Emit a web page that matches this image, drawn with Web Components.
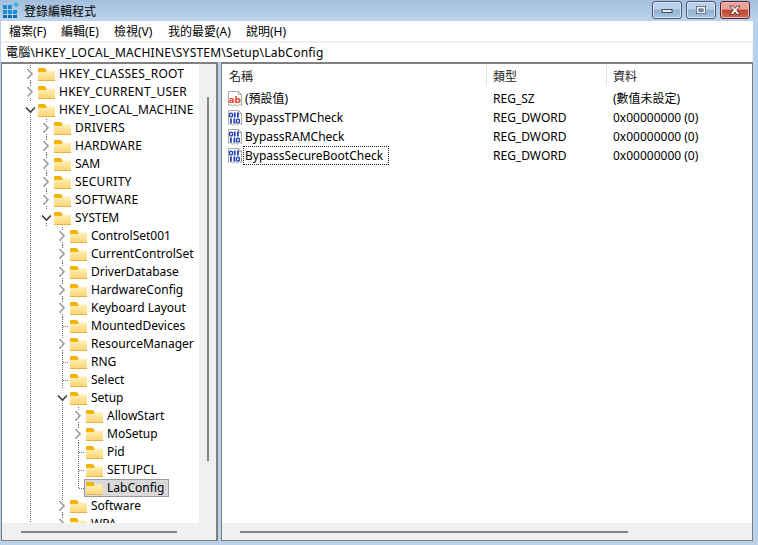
<!DOCTYPE html>
<html><head><meta charset="utf-8"><title>登錄編輯程式</title>
<style>
html,body{margin:0;padding:0;background:#b9d1ea;overflow:hidden}
body{font:12px/18px "Noto Sans","Noto Sans CJK TC",sans-serif;color:#000}
tree-row.u{letter-spacing:.25px}
tree-row.m{letter-spacing:.14px}
</style></head><body>
<reg-app>
  <title-bar slot="title" label="登錄編輯程式"></title-bar>
  <menu-bar slot="menu">
    <span style="width:52px">檔案(F)</span><span style="width:53px">編輯(E)</span><span style="width:54px">檢視(V)</span><span style="width:78px">我的最愛(A)</span><span>說明(H)</span>
  </menu-bar>
  <addr-bar slot="addr">電腦\HKEY_LOCAL_MACHINE\SYSTEM\Setup\LabConfig</addr-bar>
  <tree-pane slot="tree">
    <tree-row class="u" cells="c">HKEY_CLASSES_ROOT</tree-row>
    <tree-row class="u" cells="c">HKEY_CURRENT_USER</tree-row>
    <tree-row class="m" cells="o">HKEY_LOCAL_MACHINE</tree-row>
    <tree-row class="u" cells="v c">DRIVERS</tree-row>
    <tree-row class="u" cells="v c">HARDWARE</tree-row>
    <tree-row cells="v c">SAM</tree-row>
    <tree-row class="u" cells="v c">SECURITY</tree-row>
    <tree-row class="u" cells="v c">SOFTWARE</tree-row>
    <tree-row cells="v o">SYSTEM</tree-row>
    <tree-row cells="v _ c">ControlSet001</tree-row>
    <tree-row cells="v _ c">CurrentControlSet</tree-row>
    <tree-row cells="v _ c">DriverDatabase</tree-row>
    <tree-row cells="v _ c">HardwareConfig</tree-row>
    <tree-row cells="v _ c">Keyboard Layout</tree-row>
    <tree-row cells="v _ l">MountedDevices</tree-row>
    <tree-row cells="v _ c">ResourceManager</tree-row>
    <tree-row cells="v _ l">RNG</tree-row>
    <tree-row cells="v _ l">Select</tree-row>
    <tree-row cells="v _ o">Setup</tree-row>
    <tree-row cells="v _ v c">AllowStart</tree-row>
    <tree-row cells="v _ v c">MoSetup</tree-row>
    <tree-row cells="v _ v l">Pid</tree-row>
    <tree-row cells="v _ v l">SETUPCL</tree-row>
    <tree-row cells="v _ v e" selected>LabConfig</tree-row>
    <tree-row cells="v _ c">Software</tree-row>
    <tree-row cells="v _ c">WPA</tree-row>
  </tree-pane>
  <list-pane slot="list">
    <list-row kind="sz" name="(預設值)" type="REG_SZ" data="(數值未設定)"></list-row>
    <list-row kind="bin" name="BypassTPMCheck" type="REG_DWORD" data="0x00000000 (0)"></list-row>
    <list-row kind="bin" name="BypassRAMCheck" type="REG_DWORD" data="0x00000000 (0)"></list-row>
    <list-row kind="bin" name="BypassSecureBootCheck" type="REG_DWORD" data="0x00000000 (0)" focused></list-row>
  </list-pane>
</reg-app>
<script>
function def(name, css, html){
  customElements.define(name, class extends HTMLElement{
    constructor(){super();this.attachShadow({mode:'open'});}
    connectedCallback(){
      const a=n=>this.getAttribute(n)||'';
      this.shadowRoot.innerHTML='<style>'+css+'</style>'+(typeof html==='function'?html(a,this):html);
    }
  });
}
def('reg-app',`:host{display:grid;width:758px;height:545px;grid-template-rows:21px 20px 21px 479px 4px;grid-template-columns:1fr}
.panes{display:grid;grid-template-columns:217px 532px;column-gap:3px;padding-left:1px;min-height:0}`,
`<slot name="title"></slot><slot name="menu"></slot><slot name="addr"></slot>
<div class="panes"><slot name="tree"></slot><slot name="list"></slot></div><div></div>`);

const btn=(kind)=>{
 const glyph={min:'<rect x="10" y="8.5" width="10" height="3" fill="#e8edf2" stroke="#3d4f66"/>',
  max:'<rect x="10.5" y="5.5" width="9" height="7" fill="none" stroke="#3d4f66" stroke-width="1"/><rect x="11.5" y="6.5" width="7" height="5" fill="none" stroke="#eef2f6" stroke-width="1.6"/><rect x="13" y="8" width="4" height="2.4" fill="#7f9cba" stroke="#3d4f66" stroke-width=".6"/>',
  close:'<path d="M10 5h3.2l1.8 2.4L16.800 5H20l-3.200 4 3.200 4.500h-3.200L15 11l-1.800 2.500H10l3.200-4.500z" fill="#f2f2f2" stroke="#5a2a2a" stroke-width=".8"/>'}[kind];
 return `<svg class="b ${kind}" width="30" height="18" viewBox="0 0 30 18">${glyph}</svg>`;
};
def('title-bar',`:host{display:flex;align-items:flex-start;height:21px;background:linear-gradient(#a3bfdc,#bdd4ec);overflow:hidden}
.ic{margin:2px 5px 0 3px;flex:none}
.t{font:12px/21px "Noto Sans CJK TC","Noto Sans",sans-serif;flex:1}
.btns{display:flex;gap:4px;margin:1px 8px 0 0}
.b{border-radius:3px;display:block}
.wrap{width:30px;height:18px;box-sizing:border-box;border:1px solid #46597a;border-radius:3px;box-shadow:inset 0 0 0 1px #d6e3f0;background:linear-gradient(#bcd0e5 0 45%,#8fb0d1 50%,#a9c4de 100%);overflow:hidden}
.wrap.close{border-color:#5a1f2e;background:linear-gradient(#e8a497 0 45%,#c1412c 50%,#cf6c57 100%);box-shadow:inset 0 0 0 1px #e8c0b8}
.wrap svg{margin:-1px;width:30px;height:18px}`,
a=>`<svg class="ic" width="16" height="17" viewBox="0 0 16 17"><g fill="#1d8fd1"><rect x="0" y="3" width="4" height="4"/><rect x="5" y="3" width="4" height="4"/><rect x="0" y="8" width="4" height="4"/><rect x="5" y="8" width="4" height="4"/><rect x="10" y="8" width="4" height="4"/><rect x="0" y="13" width="4" height="3" fill="#0f6fb0"/><rect x="5" y="13" width="4" height="3" fill="#0f6fb0"/><rect x="10" y="13" width="4" height="3" fill="#0f6fb0"/></g><rect x="11" y="0.500" width="4" height="4" transform="rotate(45 13 2.500)" fill="#35b6e8"/></svg>
<div class="t">${a('label')}</div>
<div class="btns"><div class="wrap">${btn('min')}</div><div class="wrap">${btn('max')}</div><div class="wrap close">${btn('close')}</div></div>`);

def('menu-bar',`:host{display:flex;align-items:center;background:#fff;margin-right:5px;margin-left:1px;padding:1px 0 0 8px;height:20px;box-sizing:border-box;
 font:12px/19px "Noto Sans","Noto Sans CJK TC",sans-serif}
::slotted(span){display:block;white-space:nowrap}`,`<slot></slot>`);

def('addr-bar',`:host{display:block;margin:0 5px 0 1px;padding-left:5px;height:21px;box-sizing:border-box;background:#fff;border-top:2px solid #f0f0f0;border-right:1px solid #f0f0f0;
 font:12px/19px "Noto Sans","Noto Sans CJK TC",sans-serif;letter-spacing:.22px;white-space:nowrap;overflow:hidden}`,`<slot></slot>`);

const sbar=`
.sb-v{background:#f0f0f0;width:17px;flex:none;display:flex;justify-content:center}
.sb-v i{display:block;width:2px;background:#858585;margin-top:33px;height:364px}
.sb-h{background:#f0f0f0;height:17px;flex:none;display:flex;align-items:center}
.sb-h i{display:block;height:2px;background:#858585}`;

def('tree-pane',`:host{display:flex;flex-direction:column;height:479px;box-sizing:border-box;border:1px solid #7f7f7f;border-top:2px solid #808080;border-right-width:2px;background:#fff;overflow:hidden}
.top{display:flex;flex:1;min-height:0}
.rows{flex:1;overflow:hidden;padding:1px 0 0 20px;white-space:nowrap}
${sbar}
.sb-h i{width:156px;margin-left:19px}`,
`<div class="top"><div class="rows"><slot></slot></div><div class="sb-v"><i></i></div></div><div class="sb-h"><i></i></div>`);

const dots='stroke="#6a6a6a" stroke-dasharray="1 1" stroke-width="1"';
const cell=k=>{
  const V=(a,b)=>`<line x1="8.5" x2="8.5" y1="${a}" y2="${b}" ${dots}/>`;
  const H=`<line x1="9" x2="15" y1="9.5" y2="9.5" ${dots}/>`;
  let s='';
  if(k==='v') s=V(0,18);
  if(k==='l') s=V(0,18)+H;
  if(k==='e') s=V(0,10)+H;
  if(k==='c') s=V(0,3)+V(15,18)+`<path d="M5.500 4 10 8.800l-4.500 4.800" fill="none" stroke="#a2a2a2" stroke-width="1.700"/>`;
  if(k==='o') s=V(14,18)+`<path d="M4 6.500l4.500 4.500L13 6.500" fill="none" stroke="#404040" stroke-width="1.700"/>`;
  return `<svg width="16" height="18" viewBox="0 0 16 18">${s}</svg>`;
};
let fid=0;
const folder=()=>{const id='f'+(fid++);return `<svg class="fo" width="17" height="18" viewBox="0 0 17 18"><defs><linearGradient id="${id}" x1="0" x2="0" y1="0" y2="1"><stop offset="0" stop-color="#fff0b8"/><stop offset="1" stop-color="#fbd56f"/></linearGradient></defs><path d="M0 4a1 1 0 0 1 1-1h5.500l2 2H0z" fill="#f2b200"/><rect x="0" y="5" width="8.500" height="2" fill="#f5b50c"/><path d="M0 7h8l1.500-1.500H16a1 1 0 0 1 1 1V15a1 1 0 0 1-1 1H1a1 1 0 0 1-1-1z" fill="url(#${id})"/><rect x="0" y="15" width="17" height="1" fill="#e9b24a"/></svg>`};
def('tree-row',`:host{display:flex;height:18px;align-items:stretch}
svg{display:block;flex:none}
.lab{display:flex;align-items:center;height:18px}
.t{margin-left:3px;padding:0 1px;font:12px/18px "Noto Sans","Noto Sans CJK TC",sans-serif;white-space:nowrap}
.sel{box-sizing:border-box;outline:1px solid #9a9a9a;outline-offset:-1px;background:#d9d9d9;margin-left:-2px;padding:0 4px 0 2px}`,
(a,el)=>{
  const cells=a('cells').split(' ').map(cell).join('');
  const sel=el.hasAttribute('selected');
  return cells+`<div class="lab ${sel?'sel':''}">${folder()}<span class="t"><slot></slot></span></div>`;
});

const cols=`display:grid;grid-template-columns:265px 120px 1fr`;
def('list-pane',`:host{display:flex;flex-direction:column;height:479px;box-sizing:border-box;border:1px solid #7f7f7f;border-top:2px solid #808080;background:#fff;overflow:hidden}
.hd{${cols};height:22px;font:12px/24px "Noto Sans CJK TC","Noto Sans",sans-serif;color:#1a1a1a;flex:none;margin-bottom:3px;overflow:hidden}
.hd div{padding-left:6px;box-sizing:border-box;border-right:1px solid #e5e5e5}
.hd div:first-child{padding-left:7px}
.body{flex:1;min-height:0}
${sbar}
.sb-h i{width:388px;margin-left:18px}`,
`<div class="hd"><div>名稱</div><div>類型</div><div style="border:0">資料</div></div><div class="body"><slot></slot></div><div class="sb-h"><i></i></div>`);

const page=`<path d="M1.500.500h10l3 3v11l-2-1-2 1.500-2.500-1.500-2.500 1.500-2-1.500-2 1z" fill="#fff" stroke="#a9a9a9"/><path d="M11.500.500v3h3" fill="none" stroke="#a9a9a9"/>`;
const binIcon=`<svg width="16" height="16" viewBox="0 0 16 16">${page}<g fill="none" stroke="#1f3fb4" stroke-width="1.300"><rect x="2.600" y="3.100" width="2.800" height="3.800" rx="1"/><rect x="9.600" y="9.100" width="2.800" height="3.800" rx="1"/></g><g fill="#1f3fb4"><rect x="6.800" y="2.500" width="1.800" height="5"/><rect x="10" y="2.500" width="1.800" height="5"/><rect x="3" y="8.500" width="1.800" height="5"/><rect x="6.500" y="8.500" width="1.800" height="5"/></g></svg>`;
const abIcon=`<svg width="16" height="16" viewBox="0 0 16 16">${page}<text x="7.800" y="11.500" text-anchor="middle" font-family="DejaVu Sans,sans-serif" font-weight="700" font-size="9" fill="#d9472b">ab</text></svg>`;
def('list-row',`:host{${cols};height:19px;font:12px/19px "Noto Sans","Noto Sans CJK TC",sans-serif;white-space:nowrap}
.n{display:flex;align-items:center;padding-left:5px}
svg{display:block;flex:none}
.t{margin-left:0;padding:0 5px 0 1px;line-height:17px;height:17px;border:1px solid transparent;box-sizing:content-box;margin-top:-1px}
.t.f{border:1px dotted #222}
.c{padding-left:6px}`,
(a,el)=>`<div class="n">${a('kind')==='sz'?abIcon:binIcon}<span class="t ${el.hasAttribute('focused')?'f':''}">${a('name')}</span></div><div class="c">${a('type')}</div><div class="c">${a('data')}</div>`);
</script>
</body></html>
